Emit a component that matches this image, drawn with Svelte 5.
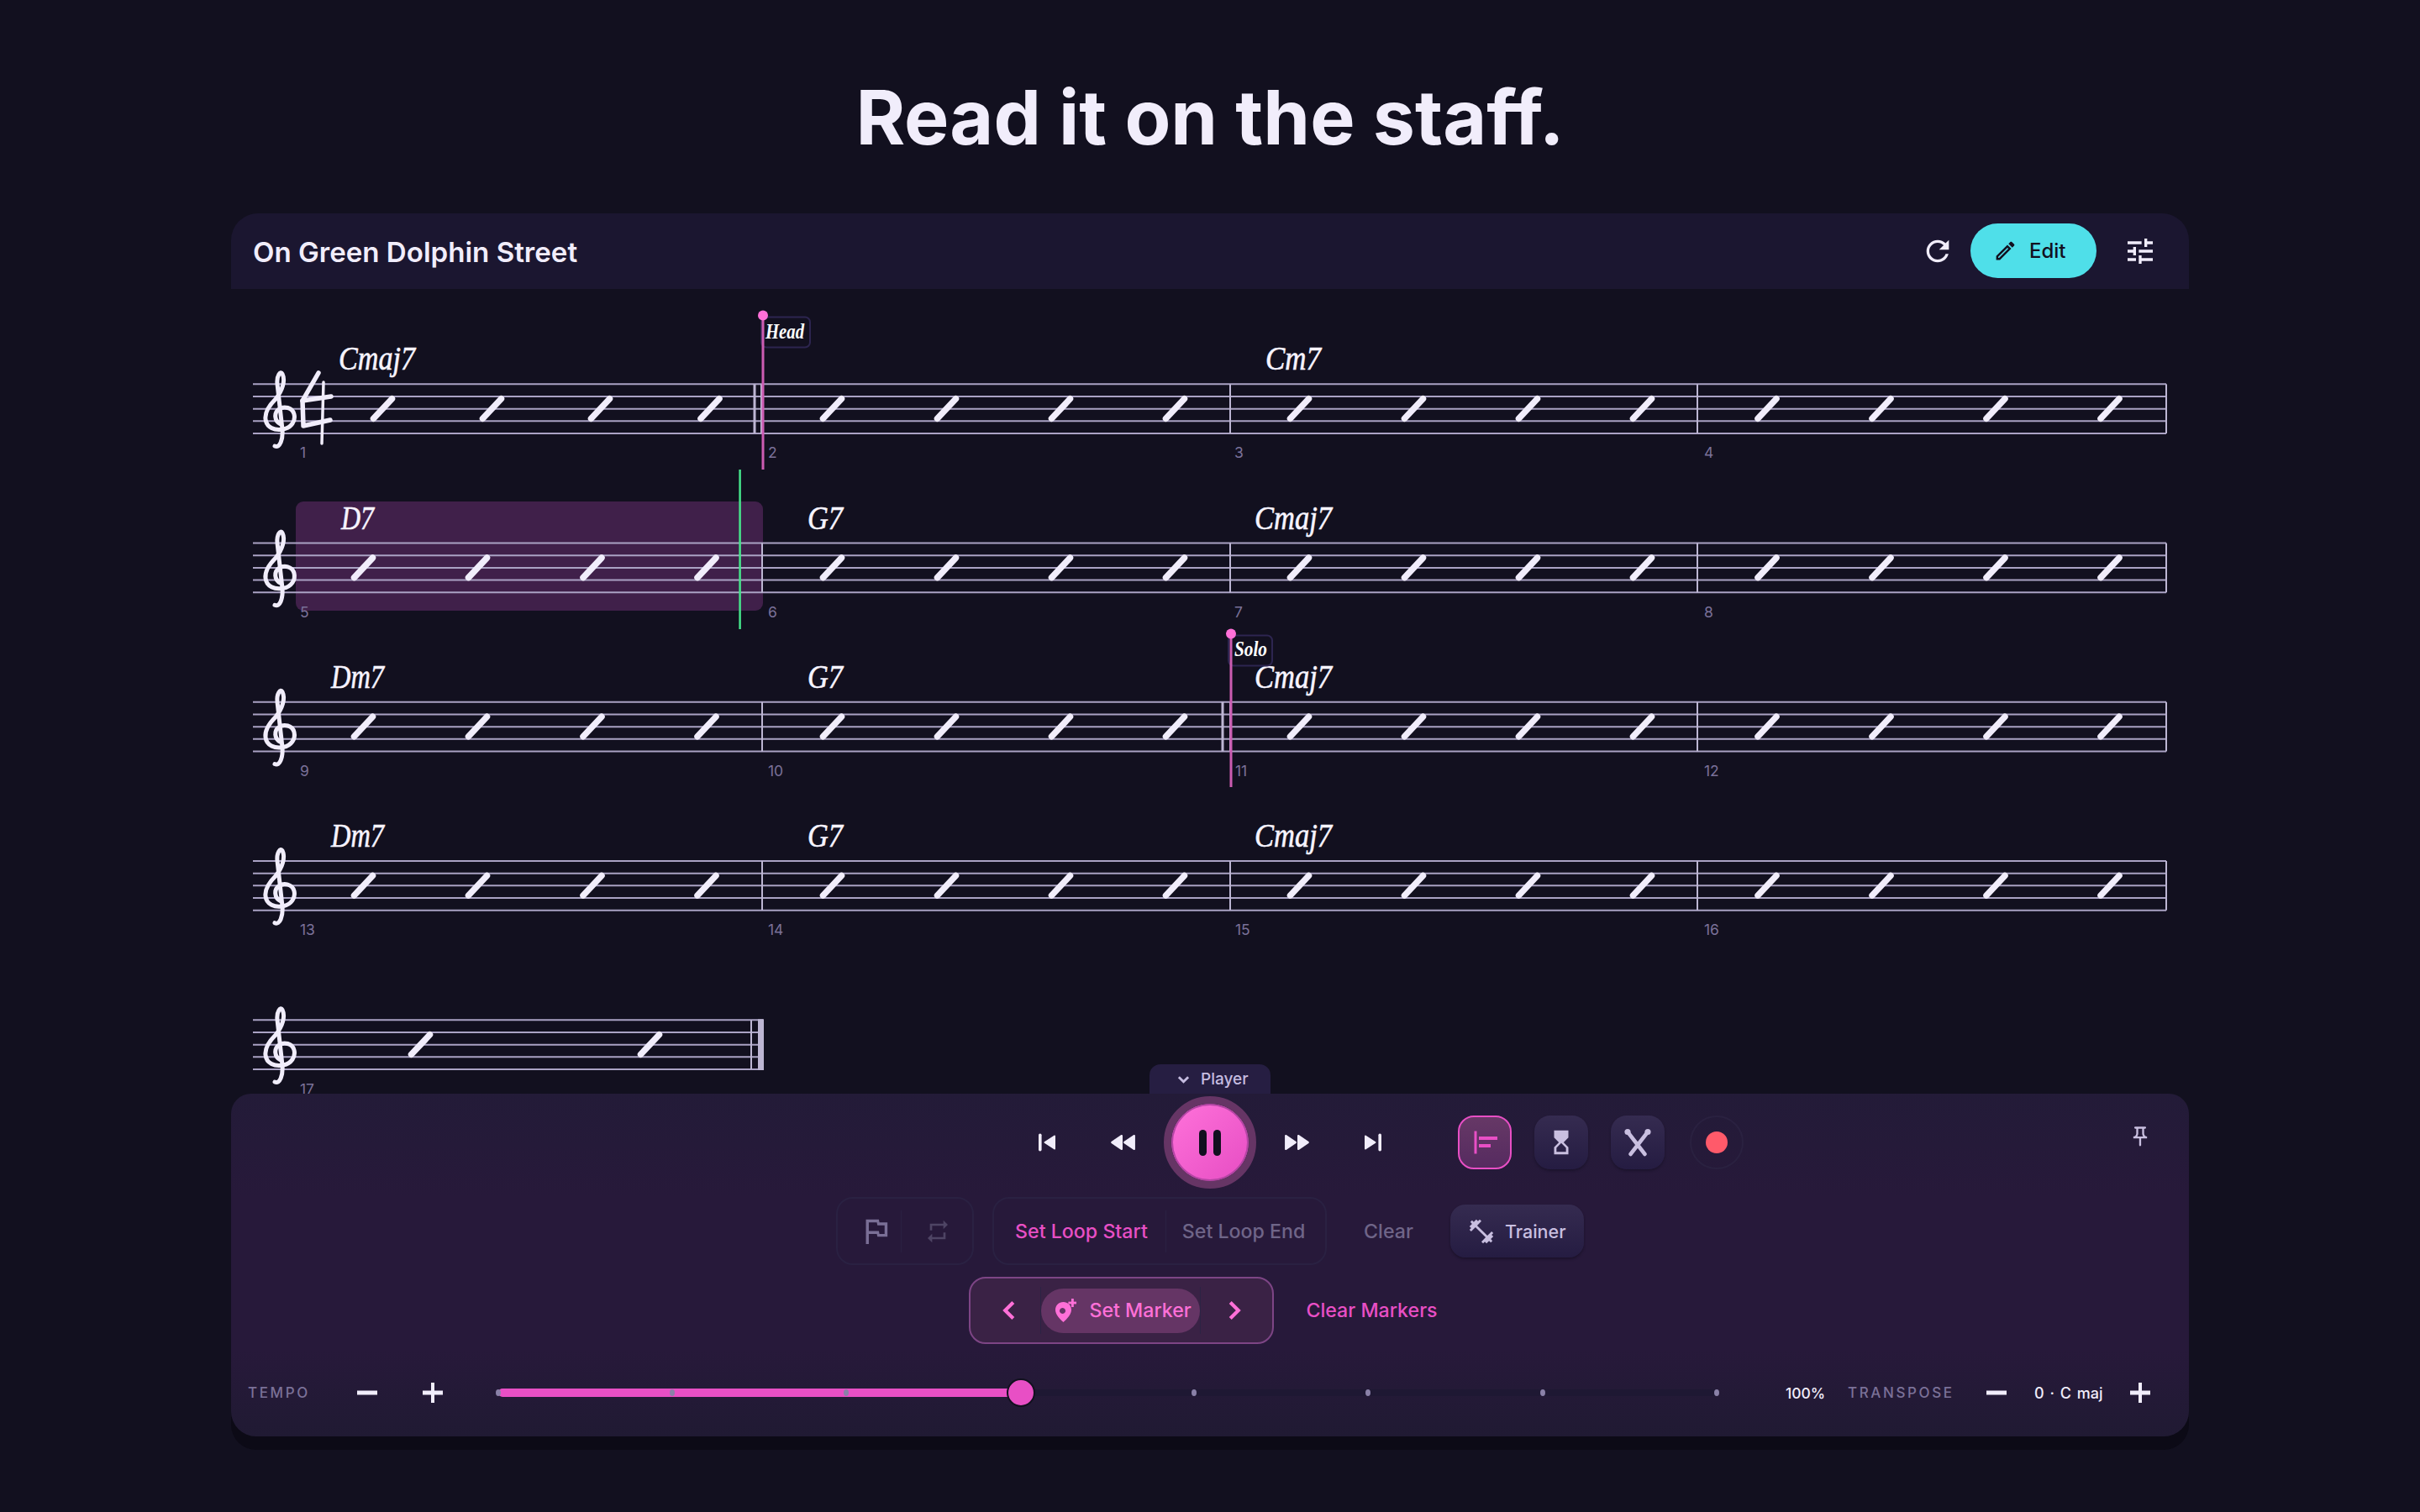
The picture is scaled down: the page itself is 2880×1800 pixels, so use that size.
<script>
  const rowY = [457.3, 646.6, 835.8, 1025, 1214.3];
  const gap = 14.67;
  const rows = [
    { bars: [[898, 3], [906, 2], [1464, 2], [2020, 2], [2578, 2]], first: [455.5, 585.5, 714.5, 845],
      chords: [['Cmaj7', 403, 91], ['Cm7', 1506, 66]], nums: [['1', 357], ['2', 914], ['3', 1469], ['4', 2028]] },
    { bars: [[907, 2], [1464, 2], [2020, 2], [2578, 2]], first: [432.5, 568.5, 705, 841],
      chords: [['D7', 406, 39], ['G7', 961, 42], ['Cmaj7', 1493, 92]], nums: [['5', 357], ['6', 914], ['7', 1469], ['8', 2028]] },
    { bars: [[907, 2], [1455, 3], [1464, 2], [2020, 2], [2578, 2]], first: [432.5, 568.5, 705, 841],
      chords: [['Dm7', 394, 63], ['G7', 961, 42], ['Cmaj7', 1493, 92]], nums: [['9', 357], ['10', 914], ['11', 1470], ['12', 2028]] },
    { bars: [[907, 2], [1464, 2], [2020, 2], [2578, 2]], first: [432.5, 568.5, 705, 841],
      chords: [['Dm7', 394, 63], ['G7', 961, 42], ['Cmaj7', 1493, 92]], nums: [['13', 357], ['14', 914], ['15', 1470], ['16', 2028]] }
  ];
  const rest = [990.5, 1126.5, 1262.5, 1398.5, 1546.5, 1682.5, 1818.5, 1954.5, 2103, 2239, 2375, 2511];
  const ticks = [0, 207, 414, 621, 828, 1035, 1243, 1450];
</script>

<main class="page">
  <h1 class="headline">Read it on the staff.</h1>

  <section class="card">
    <header class="head">
      <h2 class="song">On Green Dolphin Street</h2>
      <div class="head-actions">
        <svg class="ic-40 light" viewBox="0 0 24 24"><path d="M17.65 6.35C16.2 4.9 14.21 4 12 4c-4.42 0-7.99 3.58-7.99 8s3.57 8 7.99 8c3.73 0 6.84-2.55 7.73-6h-2.08c-.82 2.33-3.04 4-5.65 4-3.31 0-6-2.69-6-6s2.69-6 6-6c1.66 0 3.14.69 4.22 1.78L13 11h7V4l-2.35 2.35z"/></svg>
        <button class="edit">
          <svg class="ic-pencil" viewBox="0 0 24 24"><path d="M14.06 9.02l.92.92L5.92 19H5v-.92l9.06-9.06M17.66 3c-.25 0-.51.1-.7.29l-1.83 1.83 3.75 3.75 1.83-1.83c.39-.39.39-1.02 0-1.41l-2.34-2.34c-.2-.2-.45-.29-.71-.29zm-3.6 3.19L3 17.25V21h3.75L17.81 9.94l-3.75-3.75z"/></svg>
          Edit
        </button>
        <svg class="ic-40 light tune" viewBox="0 0 24 24"><path d="M3 17v2h6v-2H3zM3 5v2h10V5H3zm10 16v-2h8v-2h-8v-2h-2v6h2zM7 9v2H3v2h4v2h2V9H7zm14 4v-2H11v2h10zm-6-4h2V7h4V5h-4V3h-2v6z"/></svg>
      </div>
    </header>

    <div class="score">
      <svg class="sheet" viewBox="275 344 2330 958" width="2330" height="958">
        <rect class="loop" x="352" y="597" width="556" height="130" rx="9" />

        {#each rowY as y, r}
          {#each [0, 1, 2, 3, 4] as i}
            <line class="staff" x1="301" x2={r === 4 ? 908 : 2578} y1={y + i * gap} y2={y + i * gap} />
          {/each}
          <g transform="translate(300 {y - 22.3})">
            <path class="clef" d="M27 96 C33 99 37 88 36 76 L30 22 C29 12 34 6 36 10 C40 18 36 30 28 40 C20 48 15 56 16 64 C17 74 27 78 37 76 C47 74 52 66 50 58 C48 50 38 48 32 52 C26 56 26 66 34 70" />
          </g>
        {/each}

        <g transform="translate(300 435)">
          <path class="four" d="M79 9 L60 42 L94 37" />
          <path class="four thin" d="M85 20 L83 93" />
          <path class="four" d="M60 42 L61 72 L93 65" />
        </g>

        {#each rows as row, r}
          {#each row.bars as [x, w]}
            <rect class="bar" x={x - w / 2} y={rowY[r]} width={w} height={gap * 4} />
          {/each}
          {#each [...row.first, ...rest] as cx}
            <line class="slash" x1={cx - 11} x2={cx + 11} y1={rowY[r] + 41} y2={rowY[r] + 17.5} />
          {/each}
          {#each row.chords as [t, x, w]}
            <text class="chord" {x} y={rowY[r] - 17} textLength={w} lengthAdjust="spacingAndGlyphs">{t}</text>
          {/each}
          {#each row.nums as [t, x]}
            <text class="num" {x} y={rowY[r] + 88}>{t}</text>
          {/each}
        {/each}

        <line class="slash" x1="489.5" x2="511.5" y1="1255.3" y2="1231.8" />
        <line class="slash" x1="762.5" x2="784.5" y1="1255.3" y2="1231.8" />
        <rect class="bar" x="893" y="1214.3" width="2" height="58.7" />
        <rect class="bar" x="902" y="1213.3" width="7" height="60.7" />
        <text class="num" x="357" y="1303">17</text>

        <line class="playhead" x1="880.6" x2="880.6" y1="559" y2="749" />

        <rect class="tag" x="906" y="377.5" width="58" height="36" rx="6" />
        <line class="marker" x1="908" x2="908" y1="376" y2="559" />
        <circle class="dot" cx="908" cy="375.5" r="6" />
        <text class="tagtext" x="911" y="403" textLength="46" lengthAdjust="spacingAndGlyphs">Head</text>

        <rect class="tag" x="1462" y="756.5" width="52" height="36" rx="6" />
        <line class="marker" x1="1465" x2="1465" y1="755" y2="937" />
        <circle class="dot" cx="1465" cy="754.5" r="6" />
        <text class="tagtext" x="1469" y="781" textLength="39" lengthAdjust="spacingAndGlyphs">Solo</text>
      </svg>
    </div>

    <section class="player">
      <div class="tab">
        <svg class="tab-chev" viewBox="0 0 16 10"><path d="M2 2 L8 8 L14 2" /></svg>
        <span>Player</span>
      </div>

      <div class="row-transport">
        <div></div>
        <div class="transport">
          <button class="plain far">
            <svg viewBox="0 0 24 24"><rect x="2" y="1.5" width="3.6" height="21" rx="1.8"/><path class="tri" d="M21 4.5 L9.5 12 L21 19.5Z"/></svg>
          </button>
          <button class="plain">
            <svg class="wide" viewBox="0 0 30 24"><path class="tri" d="M14 4.5 L3 12 L14 19.5Z M28 4.5 L17 12 L28 19.5Z"/></svg>
          </button>
          <button class="pause" aria-label="Pause"><i></i><i></i></button>
          <button class="plain">
            <svg class="wide" viewBox="0 0 30 24"><path class="tri" d="M2 4.5 L13 12 L2 19.5Z M16 4.5 L27 12 L16 19.5Z"/></svg>
          </button>
          <button class="plain far">
            <svg viewBox="0 0 24 24"><rect x="18.4" y="1.5" width="3.6" height="21" rx="1.8"/><path class="tri" d="M3 4.5 L14.5 12 L3 19.5Z"/></svg>
          </button>
        </div>
        <div class="modes">
          <button class="mode on">
            <svg viewBox="0 0 32 32"><rect x="3.5" y="2.5" width="3" height="27"/><rect x="9" y="9" width="22" height="4"/><rect x="9" y="18" width="14" height="4"/></svg>
          </button>
          <button class="mode">
            <svg class="glass" viewBox="0 0 24 24"><path d="M6 2v6h.01L6 8.01 10 12l-4 4 .01.01H6V22h12v-5.99h-.01L18 16l-4-4 4-3.99-.01-.01H18V2H6zm10 14.5V20H8v-3.5l4-4 4 4z"/></svg>
          </button>
          <button class="mode">
            <svg class="sticks" viewBox="0 0 32 34"><path d="M4 4.5 L24.5 31 M28 4.5 L7.5 31" /><circle cx="4" cy="4.5" r="3.6"/><circle cx="28" cy="4.5" r="3.6"/></svg>
          </button>
          <button class="rec" aria-label="Record"><i></i></button>
          <svg class="pin" viewBox="0 0 24 24"><path d="M14 4v5c0 1.12.37 2.16 1 3H9c.65-.86 1-1.9 1-3V4h4m3-2H7c-.55 0-1 .45-1 1s.45 1 1 1h1v5c0 1.66-1.34 3-3 3v2h5.97v7l1 1 1-1v-7H19v-2c-1.66 0-3-1.34-3-3V4h1c.55 0 1-.45 1-1s-.45-1-1-1z"/></svg>
        </div>
      </div>

      <div class="row-loop">
        <div class="group icons">
          <svg class="flag" viewBox="0 0 24 24"><path d="M14.4 6L14 4H5v17h2v-7h5.6l.4 2h7V6h-5.6zM18 14h-3.6l-.4-2H7V6h5.6l.4 2h5v6z"/></svg>
          <span class="sep"></span>
          <svg class="repeat" viewBox="0 0 24 24"><path d="M7 7h10v3l4-4-4-4v3H5v6h2V7zm10 10H7v-3l-4 4 4 4v-3h12v-6h-2v4z"/></svg>
        </div>
        <div class="group words">
          <span class="pink">Set Loop Start</span>
          <span class="sep"></span>
          <span class="dim">Set Loop End</span>
        </div>
        <span class="dim clear">Clear</span>
        <button class="trainer">
          <svg viewBox="0 0 24 24"><path d="M20.57 14.86L22 13.43 20.57 12 17 15.57 8.43 7 12 3.43 10.57 2 9.14 3.43 7.71 2 5.57 4.14 4.14 2.71 2.71 4.14l1.43 1.43L2 7.71l1.43 1.43L2 10.57 3.43 12 7 8.43 15.57 17 12 20.57 13.43 22l1.43-1.43L16.29 22l2.14-2.14 1.43 1.43 1.43-1.43-1.43-1.43L22 16.29z"/></svg>
          Trainer
        </button>
      </div>

      <div class="row-marker">
        <div class="markers">
          <svg class="chev" viewBox="0 0 16 20"><path d="M12 2 L4 10 L12 18" /></svg>
          <span class="mark-sep"></span>
          <div class="pill">
            <svg viewBox="0 0 26 28"><path fill-rule="evenodd" d="M10.5 4 C5 4 1 8 1 13.5 C1 19 7 25 10.5 28 C14 25 20 19 20 13.5 C20 8 16 4 10.5 4Z M9.5 11 a3.5 3.5 0 1 0 .01 0Z"/><rect x="20" y="0" width="2.8" height="10"/><rect x="16.4" y="3.6" width="10" height="2.8"/></svg>
            Set Marker
          </div>
          <span class="mark-sep"></span>
          <svg class="chev" viewBox="0 0 16 20"><path d="M4 2 L12 10 L4 18" /></svg>
        </div>
        <span class="pink clear-markers">Clear Markers</span>
      </div>

      <div class="row-tempo">
        <span class="cap tempo">TEMPO</span>
        <svg class="sign minus-a" viewBox="0 0 24 24"><rect x="0" y="9.5" width="24" height="5"/></svg>
        <svg class="sign plus-a" viewBox="0 0 24 24"><rect x="0" y="9.5" width="24" height="5"/><rect x="10" y="0" width="4" height="24"/></svg>
        <div class="slider">
          <div class="fill"></div>
          {#each ticks as t}
            <i class="tick" style="left:{t}px"></i>
          {/each}
          <div class="thumb"></div>
        </div>
        <span class="val pct">100%</span>
        <span class="cap transpose">TRANSPOSE</span>
        <svg class="sign minus-b" viewBox="0 0 24 24"><rect x="0" y="9.5" width="24" height="5"/></svg>
        <span class="val key">0 · C maj</span>
        <svg class="sign plus-b" viewBox="0 0 24 24"><rect x="0" y="9.5" width="24" height="5"/><rect x="10" y="0" width="4" height="24"/></svg>
      </div>
    </section>
  </section>
</main>

<style>
  :global(body) { margin: 0; background: #12101f; }
  .page { width: 2880px; height: 1800px; overflow: hidden; font-family: Inter, sans-serif; color: #f1edfb; display: flex; flex-direction: column; align-items: center; }
  .headline { margin: 85px 0 0; height: 169px; font-size: 89.6px; line-height: 110px; font-weight: 700; color: #f1edfb; }
  .card { width: 2330px; display: flex; flex-direction: column; }
  .head { height: 90px; background: #1b1630; border-radius: 32px 32px 0 0; display: flex; align-items: center; justify-content: space-between; padding: 0 38px 0 26px; box-sizing: border-box; }
  .song { margin: 0; font-size: 33.1px; font-weight: 600; color: #f1edfb; position: relative; top: 1px; }
  .head-actions { display: flex; align-items: center; }
  .ic-40 { width: 40px; height: 40px; }
  .light { fill: #f1edfb; }
  .tune { margin-left: 32px; }
  .edit { width: 150px; height: 65px; margin-left: 19px; border: 0; border-radius: 33px; background: #4fdfe9; color: #12101f; font: 500 24px Inter, sans-serif; display: flex; align-items: center; padding: 0 0 0 27px; gap: 14px; margin-top: -2px; }
  .ic-pencil { width: 29px; height: 29px; fill: #12101f; }

  .score { height: 958px; overflow: hidden; }
  .sheet { display: block; }
  .loop { fill: #40204a; }
  .staff { stroke: #aaa2c4; stroke-width: 2; }
  .bar { fill: #bdb6d3; }
  .slash { stroke: #f1edfb; stroke-width: 7.5; stroke-linecap: round; }
  .clef { fill: none; stroke: #f1edfb; stroke-width: 5; stroke-linecap: round; stroke-linejoin: round; }
  .four { fill: none; stroke: #f1edfb; stroke-width: 5.5; stroke-linecap: round; stroke-linejoin: round; }
  .four.thin { stroke-width: 3.5; }
  .chord { font: italic 400 40px "Liberation Serif", serif; fill: #f7f4ff; stroke: #f7f4ff; stroke-width: .6px; }
  .num { font: 400 17.5px Inter, sans-serif; fill: #7a7199; }
  .playhead { stroke: #46e58c; stroke-width: 2.5; }
  .marker { stroke: #cc5cb2; stroke-width: 3; }
  .dot { fill: #ff70d8; }
  .tag { fill: #12101f; stroke: #2d2550; stroke-width: 2; }
  .tagtext { font: italic 700 26px "Liberation Serif", serif; fill: #fff; }

  .player { position: relative; height: 408px; box-sizing: border-box; padding-top: 3px; border-radius: 24px 24px 30px 30px; background: linear-gradient(180deg, #231b38 0%, #27193a 30%, #27193a 75%, #201a33 100%); box-shadow: 0 16px 0 #0c0a16; display: flex; flex-direction: column; align-items: stretch; }
  .tab { position: absolute; left: 1093px; top: -35px; width: 144px; height: 35px; background: #261e42; border-radius: 13px 13px 0 0; display: flex; align-items: center; box-sizing: border-box; padding-left: 33px; gap: 13px; color: #c5bce0; font-size: 19px; font-weight: 500; }
  .tab-chev { width: 15px; height: 10px; fill: none; stroke: #c5bce0; stroke-width: 3; }

  .row-transport { display: grid; grid-template-columns: 1fr auto 1fr; align-items: center; height: 110px; }
  .transport { display: flex; align-items: center; gap: 17px; }
  button { font-family: inherit; }
  .plain { width: 64px; height: 64px; border: 0; padding: 0; background: none; display: flex; align-items: center; justify-content: center; }
  .far:first-child { margin-right: 9px; }
  .far:last-child { margin-left: 9px; }
  .plain svg { width: 24px; height: 24px; fill: #f1edfb; }
  .plain svg.wide { width: 32px; height: 26px; }
  .tri { stroke: #f1edfb; stroke-width: 2; stroke-linejoin: round; }
  .pause { width: 92px; height: 92px; margin: 9px; box-sizing: border-box; border-radius: 50%; border: 0; padding: 0; background: linear-gradient(135deg, #ff72da, #e64dc3); box-shadow: inset 0 0 0 2px #b545a5; outline: 9px solid #663565; display: flex; align-items: center; justify-content: center; gap: 8px; }
  .pause i { display: block; width: 9px; height: 31px; border-radius: 5px; background: #12101f; }

  .modes { display: flex; align-items: center; gap: 27px; padding-left: 69px; }
  .mode { width: 64px; height: 64px; box-sizing: border-box; border: 0; padding: 0; border-radius: 19px; background: linear-gradient(180deg, #352b50, #251c42); box-shadow: 0 2px 3px rgba(10, 8, 20, .35); display: flex; align-items: center; justify-content: center; }
  .mode.on { border: 2px solid #e84fc5; background: linear-gradient(180deg, #663866, #562b60); box-shadow: none; }
  .mode svg { fill: #c9bfe0; }
  .mode.on svg { width: 32px; height: 32px; fill: #e84fc5; }
  .glass { width: 34px; height: 34px; }
  .sticks { width: 32px; height: 34px; }
  .sticks path { stroke: #c9bfe0; stroke-width: 4.5; stroke-linecap: round; fill: none; }
  .rec { width: 64px; height: 64px; margin-left: 3px; box-sizing: border-box; border-radius: 50%; border: 2px solid #2a2140; background: none; padding: 0; display: flex; align-items: center; justify-content: center; }
  .rec i { width: 26px; height: 26px; border-radius: 50%; background: #ff5a6a; }
  .pin { width: 28px; height: 28px; fill: #c9bfe0; margin-left: auto; margin-right: 44px; margin-top: -14px; }

  .row-loop { margin-top: 10px; height: 81px; display: flex; justify-content: center; align-items: center; gap: 22px; }
  .group { height: 81px; box-sizing: border-box; border: 2px solid #2a2142; border-radius: 20px; display: flex; align-items: center; }
  .icons { width: 164px; padding-left: 29px; }
  .words { width: 398px; padding-left: 25px; font-size: 23px; font-weight: 500; }
  .sep { width: 1px; height: 50px; background: #2a2142; }
  .flag { width: 41px; height: 41px; fill: #7a6f96; margin-left: -4px; margin-right: 9px; }
  .repeat { width: 32px; height: 32px; fill: #4e4464; margin-left: 27px; }
  .pink { color: #e84fc5; font-size: 23.2px; font-weight: 500; }
  .dim { color: #6f6588; font-size: 23.2px; font-weight: 500; }
  .words .sep { margin: 0 19px 0 21px; }
  .clear { margin: 0 22px; }
  .trainer { width: 159px; height: 63px; border: 0; border-radius: 18px; background: linear-gradient(180deg, #352b50, #251c42); box-shadow: 0 2px 3px rgba(10, 8, 20, .4); color: #c9bfe0; font-size: 21.5px; font-weight: 500; display: flex; align-items: center; gap: 11px; padding: 0 0 0 20px; }
  .trainer svg { width: 34px; height: 34px; fill: #c9bfe0; }

  .row-marker { margin-top: 14px; height: 80px; display: flex; justify-content: center; align-items: center; gap: 18px; }
  .markers { width: 363px; height: 80px; box-sizing: border-box; border: 2px solid #7d4585; border-radius: 20px; background: #3a2245; display: flex; align-items: center; padding-left: 36px; }
  .chev { width: 20px; height: 24px; fill: none; stroke: #ff70d8; stroke-width: 3.5; }
  .mark-sep { width: 1px; height: 56px; background: #2c2344; }
  .markers > .mark-sep:nth-of-type(1) { margin-left: 27px; }
  .pill { width: 189px; height: 53px; border-radius: 27px; background: #653565; color: #ff70d8; font-size: 23.2px; font-weight: 500; display: flex; align-items: center; gap: 15px; padding-left: 16px; box-sizing: border-box; }
  .pill svg { width: 26px; height: 28px; fill: #ff70d8; flex: none; }
  .markers .chev:last-child { margin-left: 30px; }
  .clear-markers { padding: 0 16px 0 20px; }

  .row-tempo { margin-top: 40px; height: 36px; display: flex; align-items: center; padding-left: 20px; }
  .cap { font-size: 17px; font-weight: 500; letter-spacing: 2.6px; color: #7b7198; white-space: nowrap; }
  .tempo { width: 130px; }
  .transpose { width: 125px; margin-left: 26px; }
  .val { font-size: 17.5px; font-weight: 500; color: #f1edfb; white-space: nowrap; }
  .pct { width: 48px; margin-left: 82px; }
  .key { width: 82px; margin-left: 33px; font-size: 18px; word-spacing: 2px; }
  .sign { width: 24px; height: 24px; fill: #f1edfb; flex: none; }
  .plus-a { margin-left: 54px; }
  .minus-b { margin-left: 40px; }
  .plus-b { margin-left: 32px; }
  .slider { position: relative; width: 1450px; height: 8px; margin-left: 66px; background: #1e1833; flex: none; }
  .fill { position: absolute; left: 0; top: -1px; width: 622px; height: 10px; background: #e84fc5; border-radius: 5px; }
  .tick { position: absolute; top: 0; width: 6px; height: 8px; margin-left: -3px; border-radius: 50%; background: #8a81a8; }
  .thumb { position: absolute; left: 605px; top: -13px; width: 34px; height: 34px; box-sizing: border-box; border-radius: 50%; background: #e84fc5; border: 2px solid #12101f; }
</style>
